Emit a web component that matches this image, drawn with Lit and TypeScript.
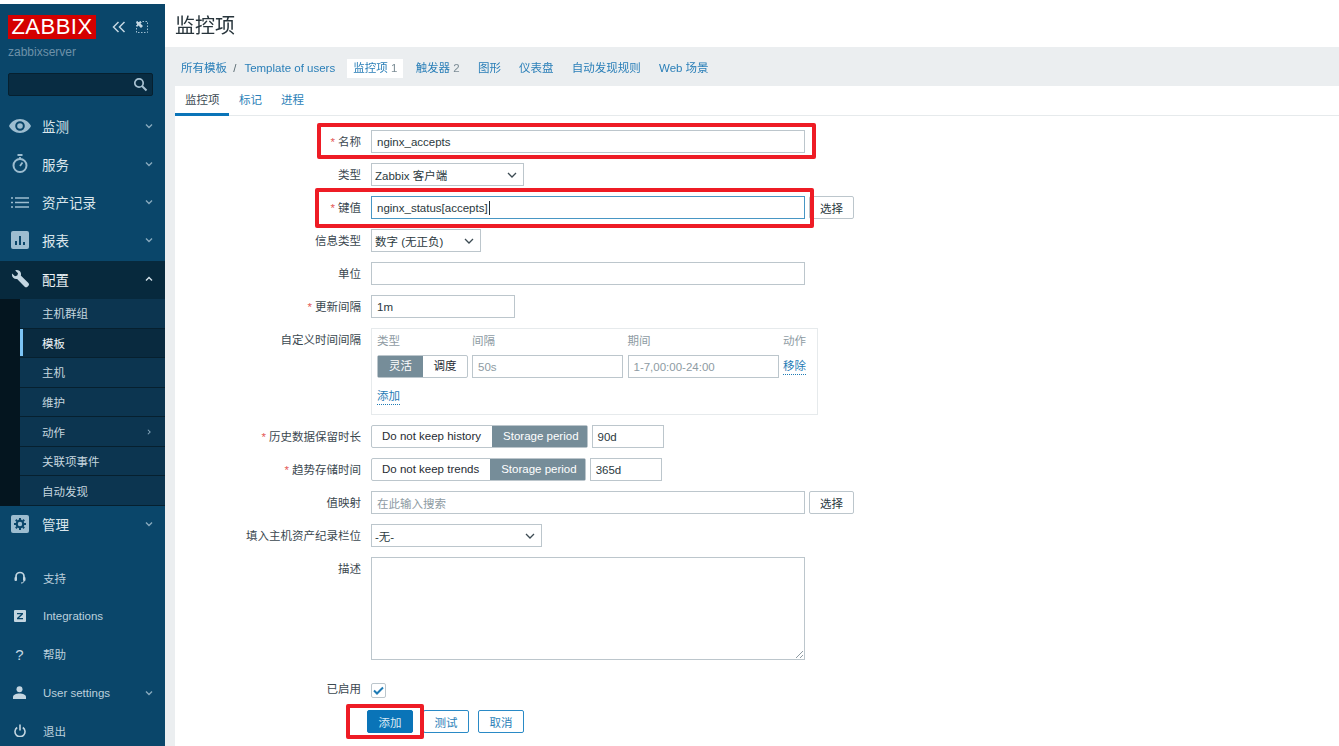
import { LitElement, html, css, svg } from "lit";
import { customElement } from "lit/decorators.js";

const chevDown = html`<svg class="chev" viewBox="0 0 8 6"><path d="M1 1.5 4 4.5 7 1.5" fill="none" stroke="currentColor" stroke-width="1.4"/></svg>`;
const chevUp = html`<svg class="chev up" viewBox="0 0 8 6"><path d="M1 4.5 4 1.5 7 4.5" fill="none" stroke="currentColor" stroke-width="1.4"/></svg>`;
const chevRight = html`<svg class="chev" viewBox="0 0 6 8"><path d="M1.5 1 4.5 4 1.5 7" fill="none" stroke="currentColor" stroke-width="1.4"/></svg>`;
const selArrow = html`<svg class="arrow" viewBox="0 0 10 6"><path d="M1 1 5 5 9 1" fill="none" stroke="#3d4b53" stroke-width="1.3"/></svg>`;

const icons: Record<string, unknown> = {
  eye: svg`<svg viewBox="0 0 22 14" width="22" height="14"><path fill-rule="evenodd" d="M11 0C6 0 2 3 0 7c2 4 6 7 11 7s9-3 11-7c-2-4-6-7-11-7Zm0 2.2A4.8 4.8 0 1 1 11 11.8 4.8 4.8 0 0 1 11 2.2Z" fill="#9dbdd0"/><circle cx="11" cy="7" r="2.8" fill="#9dbdd0"/></svg>`,
  timer: svg`<svg viewBox="0 0 16 20" width="16" height="20"><circle cx="8" cy="11.5" r="6.5" fill="none" stroke="#9dbdd0" stroke-width="2"/><path d="M5.5 1h5" stroke="#9dbdd0" stroke-width="2"/><path d="M8 3v2M8 12l2.5-3.5" stroke="#9dbdd0" stroke-width="1.8" fill="none"/></svg>`,
  list: svg`<svg viewBox="0 0 18 11" width="18" height="11"><path d="M0 1h2M4 1h14M0 5.5h2M4 5.5h14M0 10h2M4 10h14" stroke="#9dbdd0" stroke-width="1.6"/></svg>`,
  chart: svg`<svg viewBox="0 0 18 18" width="18" height="18"><rect width="18" height="18" rx="2" fill="#9dbdd0"/><path d="M5 10v4M9 5v9M13 11v3" stroke="#0a466a" stroke-width="2"/></svg>`,
  wrench: svg`<svg viewBox="0 0 18 18" width="18" height="18"><path d="M1 3.5 4 6.2l2.3-.6L7 3.2 4.2.4C6.5-.5 9 .5 9.8 2.7c.3 1 .3 1.900 0 2.700L17.400 13c.8.800.8 2 0 2.800l-.9.9c-.8.800-2 .800-2.800 0L6.100 8.900C3.500 9.500.400 7.300 1 3.500Z" fill="#c4d6e1"/></svg>`,
  gear: svg`<svg viewBox="0 0 18 18" width="18" height="18"><rect width="18" height="18" rx="2" fill="#9dbdd0"/><circle cx="9" cy="9" r="3.300" fill="none" stroke="#0a466a" stroke-width="2.200"/><path d="M9 3v2M9 13v2M3 9h2M13 9h2M4.800 4.800l1.400 1.400M11.800 11.800l1.400 1.400M13.200 4.800l-1.400 1.400M6.200 11.800l-1.400 1.400" stroke="#0a466a" stroke-width="2"/></svg>`,
  head: svg`<svg viewBox="0 0 12 13" width="12" height="13"><path d="M2 8V5.500a4 4 0 0 1 8 0V8" fill="none" stroke="#c4d6e1" stroke-width="1.700"/><rect x="0.500" y="6" width="2.500" height="4" rx="1" fill="#c4d6e1"/><rect x="9" y="6" width="2.500" height="4" rx="1" fill="#c4d6e1"/><path d="M10 10c0 1.500-1.500 2-3 2" fill="none" stroke="#c4d6e1"/></svg>`,
  z: svg`<svg viewBox="0 0 12 12" width="12" height="12"><rect width="12" height="12" rx="1" fill="#c4d6e1"/><path d="M3 3h6v1.300L5 8h4v1.300H3V8l4-3.700H3Z" fill="#0a466a"/></svg>`,
  user: svg`<svg viewBox="0 0 13 13" width="13" height="13"><circle cx="6.500" cy="3.300" r="3" fill="#c4d6e1"/><path d="M0 13v-2c0-2 3-3.500 6.500-3.500S13 9 13 11v2Z" fill="#c4d6e1"/></svg>`,
  power: svg`<svg viewBox="0 0 12 13" width="12" height="13"><path d="M3.200 3.500a5 5 0 1 0 5.600 0" fill="none" stroke="#c4d6e1" stroke-width="1.600"/><path d="M6 .5v6" stroke="#c4d6e1" stroke-width="1.600"/></svg>`,
};

const mainMenu = [
  ["eye", "监测"],
  ["timer", "服务"],
  ["list", "资产记录"],
  ["chart", "报表"],
];
const subMenu = ["主机群组", "模板", "主机", "维护", "动作", "关联项事件", "自动发现"];

@customElement("app-root")
export class AppRoot extends LitElement {
  static styles = css`
    :host { display: block; width: 1339px; height: 746px; overflow: hidden; background: #fff;
      font: 11.5px "Liberation Sans", "Noto Sans CJK SC", sans-serif; color: #1f2c33; }
    .page { display: flex; height: 746px; filter: blur(0.4px); }
    .side { width: 165px; flex: none; margin-top: 4px; background: #0a466a; color: #cfdde6; overflow: hidden; }
    .top { padding: 11px 8px 0; height: 104px; box-sizing: border-box; }
    .logoRow { display: flex; align-items: center; height: 24px; }
    .logo { width: 88px; height: 24px; background: #d40000; color: #fff; font-size: 22px; line-height: 24px; text-align: center; letter-spacing: 0.5px; }
    .ctl { margin-left: 16px; display: flex; gap: 10px; align-items: center; }
    .host { color: #6d91a8; margin-top: 5px; line-height: 16px; font-size: 12px; }
    .search { margin-top: 13px; height: 23px; width: 145px; box-sizing: border-box; background: #082c42; border: 1px solid #06202f; border-radius: 2px; display: flex; align-items: center; justify-content: flex-end; padding-right: 4px; }
    .m { display: flex; align-items: center; height: 38.250px; padding-bottom: 3px; box-sizing: border-box; color: #dbe6ec; font-size: 13.500px; position: relative; }
    .m .ic { width: 42px; flex: none; display: flex; justify-content: center; padding-right: 2px; box-sizing: border-box; }
    .m.open { background: #07293d; color: #eef4f7; height: 38px; }
    .chev { position: absolute; right: 12px; width: 8px; height: 6px; color: #87a9bd; }
    .chev.up { color: #d5e2ea; }
    .sub { display: flex; }
    .rail { width: 20px; background: #04151f; }
    .subList { flex: 1; }
    .s { height: 29.570px; box-sizing: border-box; padding-left: 22px; display: flex; align-items: center; background: #0c3550; border-bottom: 1px solid #06202f; color: #c5d5df; position: relative; }
    .s.cur { background: #092a3f; color: #eef4f7; }
    .s.cur::before { content: ""; position: absolute; left: 0; top: 0; bottom: 1px; width: 3px; background: #7cc4f5; }
    .spacer { height: 15px; }
    .m.small { font-size: 11.500px; color: #bcd0dc; padding-bottom: 1px; }
    .m.small .ic { padding-right: 4px; width: 43px; }
    .help { color: #c4d6e1; font-size: 15px; }

    .main { flex: 1; min-width: 0; display: flex; flex-direction: column; }
    .title { height: 47px; box-sizing: border-box; padding: 12px 0 0 10px; font-size: 20px; line-height: 28px; color: #27343b; }
    .crumbs { height: 39px; box-sizing: border-box; padding-top: 3px; background: #ebeef0; display: flex; align-items: center; padding-left: 10px; color: #2a7fb8; gap: 6.200px; }
    .crumbs .c { padding: 0 6px; line-height: 19px; }
    .crumbs .sep { color: #5a6a72; margin: 0 1.800px 0 0; }
    .crumbs .c.first { padding-right: 0; }
    .crumbs .c.tpl { padding-left: 0; }
    .crumbs .c.act { background: #fff; }
    .crumbs .n { color: #7b8c95; }
    .bodyWrap { flex: 1; background: #ebeef0; padding-left: 10px; min-height: 0; }
    .panel { background: #fff; height: 100%; position: relative; }
    .tabs { height: 29px; border-bottom: 1px solid #e6eaec; display: flex; box-sizing: content-box; color: #2a7fb8; }
    .tab { padding: 0 9px 0 10px; line-height: 29px; height: 30px; box-sizing: border-box; white-space: nowrap; }
    .tab.on { width: 54px; border-bottom: 3px solid #0a74b8; color: #3b4a52; }
    .form { padding-top: 14px; display: flex; flex-direction: column; gap: 10px; }
    .row { display: grid; grid-template-columns: 186px 1fr; column-gap: 10px; min-height: 23px; }
    .lab { text-align: right; height: 23px; line-height: 24px; color: #3b4850; white-space: nowrap; }
    .req { color: #e45959; margin-right: 3px; }
    .ctrl { display: flex; gap: 4px; align-items: flex-start; }
    .inp { height: 23px; box-sizing: border-box; border: 1px solid #bcc6cc; background: #fff; padding: 0 5px; display: flex; align-items: center; color: #2b3940; white-space: nowrap; }
    .w434 { width: 434px; }
    .w153 { width: 153px; }
    .w110 { width: 110px; }
    .w144 { width: 144px; }
    .w72 { width: 72px; }
    .w171 { width: 171px; }
    .w151 { width: 151px; }
    .sel { justify-content: space-between; padding: 0 3px; }
    .arrow { width: 10px; height: 6px; margin-right: 3px; }
    .focus { border-color: #4796c4; }
    .caret { display: inline-block; width: 1px; height: 14px; background: #1f2c33; margin-left: 1px; }
    .ph { color: #8e9ba3; }
    .btn { height: 23px; width: 45px; box-sizing: border-box; border: 1px solid #bcc6cc; background: #fff; color: #2b3940; display: flex; align-items: center; justify-content: center; border-radius: 2px; }
    .custom { width: 447px; height: 87px; box-sizing: border-box; border: 1px solid #e6eaec; padding: 4px 5px; }
    .cg { display: grid; grid-template-columns: 90.500px 151px 151px auto; column-gap: 4.500px; }
    .hd { color: #8e9ba3; line-height: 16px; margin-bottom: 6px; }
    .toggle { display: flex; height: 23px; box-sizing: border-box; border: 1px solid #bcc6cc; border-radius: 2px; white-space: nowrap; width: fit-content; }
    .toggle span { line-height: 21px; display: block; padding: 0 11px 0 10px; }
    .toggle .on { background: #768d99; color: #fff; padding: 0 8px 0 11px; }
    .toggle.tt { width: 91px; display: grid; grid-template-columns: 45px 1fr; text-align: center; }
    .toggle.tt span { padding: 0; }
    .lnk { color: #1f7bb5; border-bottom: 1px dotted #1f7bb5; line-height: 15px; }
    .lnk.rm { align-self: center; justify-self: start; }
    .addl { display: inline-block; margin-top: 11px; }
    .ta { width: 434px; height: 103px; box-sizing: border-box; border: 1px solid #bcc6cc; position: relative; }
    .grip { position: absolute; right: 1px; bottom: 1px; width: 8px; height: 8px; }
    .cb-row { margin-top: 7px; align-items: center; }
    .cb { width: 15px; height: 15px; box-sizing: border-box; border: 1px solid #bcc6cc; border-radius: 2px; display: flex; align-items: center; justify-content: center; margin-top: 4px; }
    .actions { display: flex; padding-left: 192px; }
    .b { height: 23px; width: 46px; box-sizing: border-box; border: 1px solid #2a8ac6; border-radius: 2px; color: #2a7fb8; display: flex; align-items: center; justify-content: center; background: #fff; }
    .b.pri { background: #0a74b8; color: #dcebf5; margin-right: 10px; border-color: #0a74b8; }
    .b.mid { margin-right: 9px; }
    .mark { position: absolute; box-sizing: border-box; border: 4px solid #ee1c25; border-radius: 2px; pointer-events: none; }
    .mark.a { left: 142px; top: 37px; width: 499px; height: 36px; }
    .mark.b2 { left: 140px; top: 102px; width: 499px; height: 40px; }
    .mark.c { left: 171px; top: 618px; width: 78px; height: 35px; }
  `;

  private mItem(ic: string, label: unknown, cls = "", chev: unknown = null) {
    return html`<div class="m ${cls}"><span class="ic">${icons[ic]}</span><span>${label}</span>${chev}</div>`;
  }

  private row(label: string, req: boolean, body: unknown, cls = "") {
    return html`<div class="row ${cls}"><div class="lab">${req ? html`<span class="req">*</span>` : ""}${label}</div><div class="ctrl">${body}</div></div>`;
  }

  render() {
    return html`<div class="page">
      <nav class="side">
        <div class="top">
          <div class="logoRow">
            <div class="logo">ZABBIX</div>
            <div class="ctl">
              <svg width="14" height="12" viewBox="0 0 14 12"><path d="M6.500 1 1.500 6l5 5M12.500 1l-5 5 5 5" fill="none" stroke="#c4d6e1" stroke-width="1.500"/></svg>
              <svg width="12" height="12" viewBox="0 0 12 12"><path d="M.5.5h11v11H.5Z" fill="none" stroke="#9dbdd0" stroke-dasharray="1.500 1.500"/><path d="M1 1h5L4.500 2.500 7 5 5 7 2.500 4.500 1 6Z" fill="#c4d6e1"/></svg>
            </div>
          </div>
          <div class="host">zabbixserver</div>
          <div class="search"><svg width="15" height="15" viewBox="0 0 15 15"><circle cx="6" cy="6" r="4.200" fill="none" stroke="#a8c2d2" stroke-width="1.700"/><path d="M9 9l4.500 4.500" stroke="#a8c2d2" stroke-width="2"/></svg></div>
        </div>
        ${mainMenu.map(([i, l]) => this.mItem(i, l, "", chevDown))}
        ${this.mItem("wrench", "配置", "open", chevUp)}
        <div class="sub">
          <div class="rail"></div>
          <div class="subList">
            ${subMenu.map((s, i) => html`<div class="s ${i === 1 ? "cur" : ""}">${s}${i === 4 ? chevRight : ""}</div>`)}
          </div>
        </div>
        ${this.mItem("gear", "管理", "", chevDown)}
        <div class="spacer"></div>
        ${this.mItem("head", "支持", "small")}
        ${this.mItem("z", "Integrations", "small")}
        <div class="m small"><span class="ic help">?</span><span>帮助</span></div>
        ${this.mItem("user", "User settings", "small", chevDown)}
        ${this.mItem("power", "退出", "small")}
      </nav>
      <main class="main">
        <div class="title">监控项</div>
        <div class="crumbs">
          <span class="c first">所有模板</span><span class="sep">/</span><span class="c tpl">Template of users</span>
          <span class="c act">监控项 <span class="n">1</span></span>
          <span class="c">触发器 <span class="n">2</span></span>
          <span class="c">图形</span>
          <span class="c">仪表盘</span>
          <span class="c">自动发现规则</span>
          <span class="c">Web 场景</span>
        </div>
        <div class="bodyWrap">
          <div class="panel">
            <div class="tabs">
              <div class="tab on">监控项</div>
              <div class="tab">标记</div>
              <div class="tab">进程</div>
            </div>
            <div class="form">
              ${this.row("名称", true, html`<div class="inp w434">nginx_accepts</div>`)}
              ${this.row("类型", false, html`<div class="inp sel w153">Zabbix 客户端${selArrow}</div>`)}
              ${this.row("键值", true, html`<div class="inp w434 focus">nginx_status[accepts]<span class="caret"></span></div><div class="btn">选择</div>`)}
              ${this.row("信息类型", false, html`<div class="inp sel w110">数字 (无正负)${selArrow}</div>`)}
              ${this.row("单位", false, html`<div class="inp w434"></div>`)}
              ${this.row("更新间隔", true, html`<div class="inp w144">1m</div>`)}
              ${this.row("自定义时间间隔", false, html`<div class="custom">
                <div class="cg">
                  <div class="hd">类型</div><div class="hd">间隔</div><div class="hd">期间</div><div class="hd">动作</div>
                  <div class="toggle tt"><span class="on">灵活</span><span>调度</span></div>
                  <div class="inp ph w151">50s</div>
                  <div class="inp ph w151">1-7,00:00-24:00</div>
                  <div class="lnk rm">移除</div>
                </div>
                <span class="lnk addl">添加</span>
              </div>`)}
              ${this.row("历史数据保留时长", true, html`<div class="toggle"><span>Do not keep history</span><span class="on">Storage period</span></div><div class="inp w72">90d</div>`)}
              ${this.row("趋势存储时间", true, html`<div class="toggle"><span>Do not keep trends</span><span class="on">Storage period</span></div><div class="inp w72">365d</div>`)}
              ${this.row("值映射", false, html`<div class="inp ph w434">在此输入搜索</div><div class="btn">选择</div>`)}
              ${this.row("填入主机资产纪录栏位", false, html`<div class="inp sel w171">-无-${selArrow}</div>`)}
              ${this.row("描述", false, html`<div class="ta"><svg class="grip" viewBox="0 0 8 8"><path d="M1 8l7-7M5 8l3-3" stroke="#8e9ba3"/></svg></div>`)}
              ${this.row("已启用", false, html`<div class="cb"><svg width="11" height="9" viewBox="0 0 11 9"><path d="M1 4.500 4 7.500 10 1.500" fill="none" stroke="#1f7bb5" stroke-width="2"/></svg></div>`, "cb-row")}
              <div class="actions">
                <div class="b pri">添加</div><div class="b mid">测试</div><div class="b">取消</div>
              </div>
            </div>
            <div class="mark a"></div><div class="mark b2"></div><div class="mark c"></div>
          </div>
        </div>
      </main>
    </div>`;
  }
}
